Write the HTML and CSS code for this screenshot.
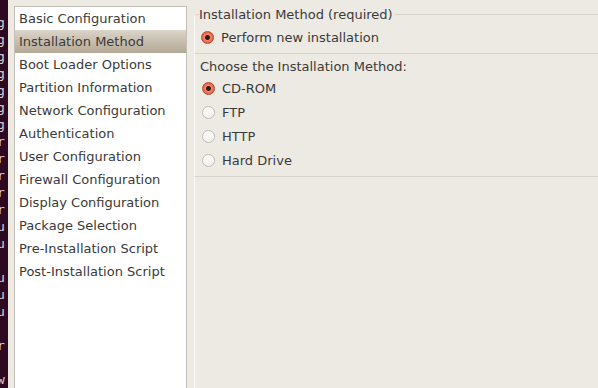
FILE: index.html
```html
<!DOCTYPE html>
<html lang="en">
<head>
    <meta charset="UTF-8">
    <title>Kickstart Configurator</title>
    <link rel="stylesheet" href="styles.css">
</head>
<body>
    <div class="screen">
        <div class="term" aria-hidden="true">
            <pre>g
g
g
g
g
g
g
r
r
r
r
r
u
u

u
u
u

r

w</pre>
        </div>

        <div class="window">
            <ul class="nav">
                <li>Basic Configuration</li>
                <li class="active">Installation Method</li>
                <li>Boot Loader Options</li>
                <li>Partition Information</li>
                <li>Network Configuration</li>
                <li>Authentication</li>
                <li>User Configuration</li>
                <li>Firewall Configuration</li>
                <li>Display Configuration</li>
                <li>Package Selection</li>
                <li>Pre-Installation Script</li>
                <li>Post-Installation Script</li>
            </ul>

            <div class="content">
                <fieldset class="frame">
                    <legend>Installation Method (required)</legend>
                    <div class="option"><span class="radio checked"></span>Perform new installation</div>
                </fieldset>

                <div class="method">
                    <div class="caption">Choose the Installation Method:</div>
                    <div class="option"><span class="radio checked"></span>CD-ROM</div>
                    <div class="option"><span class="radio"></span>FTP</div>
                    <div class="option"><span class="radio"></span>HTTP</div>
                    <div class="option"><span class="radio"></span>Hard Drive</div>
                </div>

                <div class="rest"></div>
            </div>
        </div>
    </div>
</body>
</html>
```

FILE: styles.css
```css
body {
    margin: 0;
    background-color: #edeae4;
    font-family: "DejaVu Sans", sans-serif;
    font-size: 13px;
    color: #3a3a3a;
}
.screen {
    display: flex;
    height: 388px;
    overflow: hidden;
}
.term {
    width: 8px;
    flex-shrink: 0;
    background-color: #2e0a22;
    overflow: hidden;
}
.term pre {
    margin: 14px 0 0 -3px;
    font-family: "DejaVu Sans Mono", monospace;
    font-size: 13px;
    line-height: 17px;
    color: #d8d0d4;
}
.window {
    flex: 1;
    display: flex;
    padding: 6px 0 0 6px;
}
.nav {
    list-style: none;
    margin: 0;
    padding: 0;
    width: 171px;
    height: 400px;
    flex-shrink: 0;
    background-color: #fff;
    border: 1px solid #c4bfb6;
}
.nav li {
    height: 23px;
    line-height: 23px;
    padding-left: 4px;
    white-space: nowrap;
}
.nav .active {
    background: linear-gradient(#dbd4c9, #b3a894);
}
.content {
    flex: 1;
    display: flex;
    flex-direction: column;
    margin-left: 7px;
}
.frame {
    margin: 0;
    padding: 2px 0 4px 4px;
    border: 0;
    border-top: 1px solid #d9d4cb;
    border-bottom: 1px solid #d9d4cb;
    border-left: 1px solid #fbfaf8;
    border-top-left-radius: 4px;
}
.frame legend {
    padding: 0 2px 0 0;
    line-height: 17px;
}
.method {
    padding: 4px 0 4px 5px;
    border-left: 1px solid #fbfaf8;
    border-bottom: 1px solid #d9d4cb;
}
.caption {
    height: 18px;
    line-height: 18px;
}
.rest {
    flex: 1;
    border-left: 1px solid #fbfaf8;
}
.option {
    display: flex;
    align-items: center;
    height: 24px;
}
.radio {
    width: 11px;
    height: 11px;
    margin: 0 7px 0 2px;
    border-radius: 50%;
    border: 1px solid #c2bdb4;
    background: linear-gradient(#ffffff, #f1eee9);
}
.radio.checked {
    border-color: #b8492f;
    background: radial-gradient(circle, #3a1812 0 2px, #f28a70 3px, #e0563a 6px);
}
```
